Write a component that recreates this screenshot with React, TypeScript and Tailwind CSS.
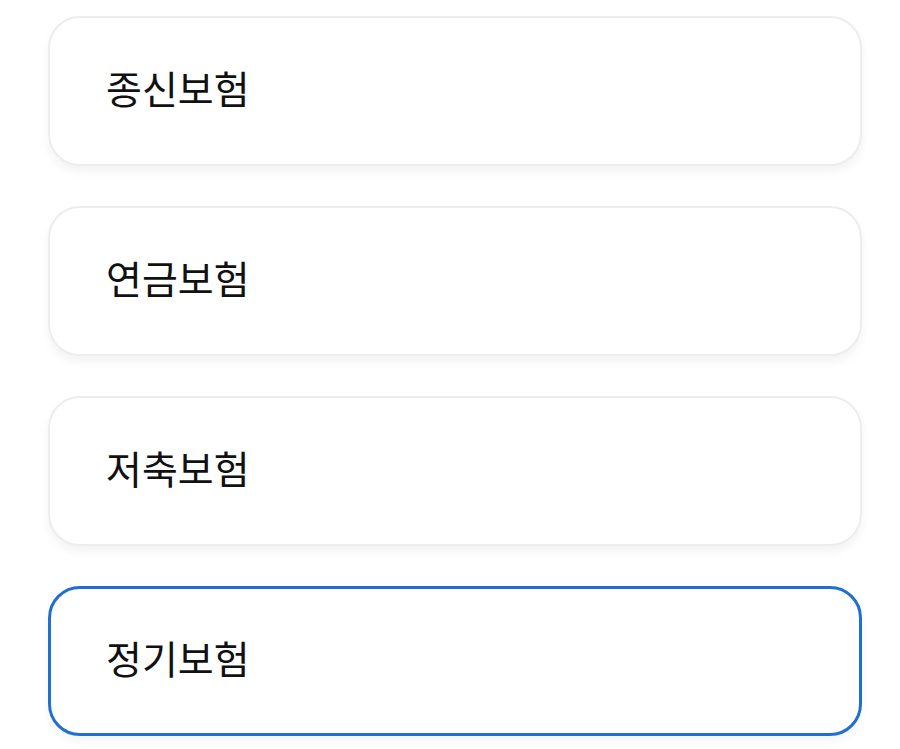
const ITEMS = ["종신보험", "연금보험", "저축보험", "정기보험"];
const SELECTED = "정기보험";

export default function App() {
  return (
    <div className="min-h-screen w-full bg-white pt-[16px] px-[48px]" style={{ fontFamily: '"Noto Sans CJK KR", "Noto Sans", sans-serif' }}>
      <ul className="flex flex-col gap-[40px]">
        {ITEMS.map((label) => {
          const active = label === SELECTED;
          return (
            <li
              key={label}
              className={
                active
                  ? "h-[150px] w-[814px] rounded-[32px] border-[3px] border-[#1f6fd0] bg-white flex items-center pl-[55px] pb-[8px] shadow-[0_6px_10px_rgba(0,0,0,0.04)]"
                  : "h-[150px] w-[814px] rounded-[32px] border-2 border-[#ededed] bg-white flex items-center pl-[56px] pb-[8px] shadow-[0_6px_10px_rgba(0,0,0,0.05)]"
              }
            >
              <span className="text-[39px] leading-none text-[#111111]">{label}</span>
            </li>
          );
        })}
      </ul>
    </div>
  );
}
